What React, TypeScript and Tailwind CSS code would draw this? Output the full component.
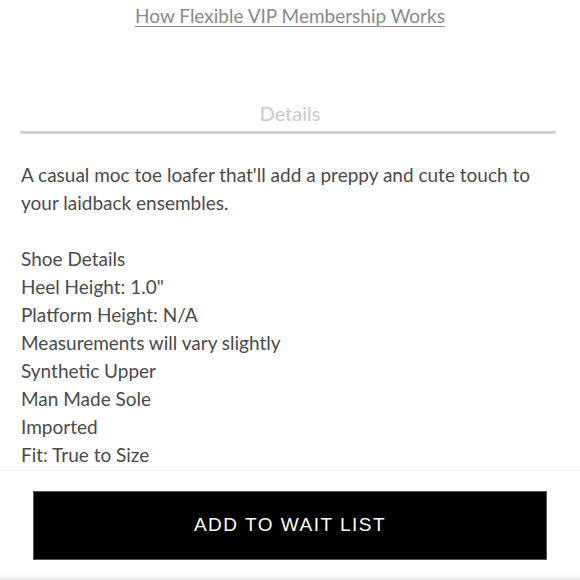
import React from 'react';

const details = [
  'Shoe Details',
  'Heel Height: 1.0"',
  'Platform Height: N/A',
  'Measurements will vary slightly',
  'Synthetic Upper',
  'Man Made Sole',
  'Imported',
  'Fit: True to Size',
];

const App: React.FC = () => {
  return (
    <div className="w-[580px] h-[580px] overflow-hidden bg-white flex flex-col font-['Lato',sans-serif]">
      <div className="flex-1 overflow-hidden">
        <div className="pt-[3px] text-center">
          <a className="text-[19px] leading-[26px] text-[#8a8a8a] underline underline-offset-[3px] decoration-[1px]">How Flexible VIP Membership Works</a>
        </div>

        <div className="mt-[71px] mx-[20px]">
          <div className="text-center text-[20px] leading-[26px] text-[#c8c8c8]">Details</div>
          <div className="mt-[5px] h-[3px] bg-[#d2d2d2] mr-[4px]" />
        </div>

        <div className="px-[21px] pt-[27px] text-[19px] leading-[28px] text-[#4a4a4a]">
          <p>A casual moc toe loafer that'll add a preppy and cute touch to your laidback ensembles.</p>
          <div className="mt-[28px]">
            {details.map(d => (
              <p key={d}>{d}</p>
            ))}
          </div>
        </div>
      </div>

      <div className="h-[110px] shrink-0 border-t border-[#efefef] bg-white flex flex-col">
        <div className="pt-[20px] px-[33px]">
          <button className="w-full h-[69px] bg-black border border-[#555] text-white text-[19px] tracking-[1.5px] font-['Liberation_Sans',sans-serif]">
            ADD TO WAIT LIST
          </button>
        </div>
        <div className="mt-auto h-[6px] bg-gradient-to-b from-white to-[#e8e8e8]" />
      </div>
    </div>
  );
};

export default App;
